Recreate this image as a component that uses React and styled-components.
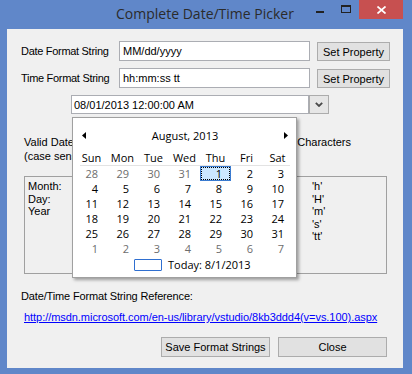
import styled, { createGlobalStyle } from "styled-components";

const GlobalStyle = createGlobalStyle`
  html, body { margin: 0; padding: 0; background: #6087c9; }
  body { font-family: "Liberation Sans", Arial, sans-serif; }
`;

const Frame = styled.div`
  width: 412px;
  height: 374px;
  box-sizing: border-box;
  background: #6087c9;
  padding: 0 9px 6px 7px;
  display: flex;
  flex-direction: column;
`;

const TitleBar = styled.div`
  height: 29px;
  display: grid;
  grid-template-columns: 1fr auto 1fr;
  align-items: start;
`;

const Title = styled.div`
  grid-column: 2;
  font-family: "Open Sans", "Noto Sans", sans-serif;
  font-size: 14px;
  line-height: 27px;
  color: #2b2b2b;
`;

const Controls = styled.div`
  grid-column: 3;
  justify-self: end;
  display: flex;
`;

const WinButton = styled.div`
  width: ${({ $wide }) => ($wide ? "44px" : "26px")};
  height: 19px;
  box-sizing: border-box;
  padding-top: ${({ $top }) => $top}px;
  display: flex;
  justify-content: center;
  align-items: flex-start;
  background: ${({ $wide }) => ($wide ? "#c75050" : "transparent")};
`;

const Client = styled.div`
  flex: 1;
  background: #f0f0f0;
  padding-top: 12px;
  font-size: 11px;
  color: #000;
`;

const FormRow = styled.div`
  display: grid;
  grid-template-columns: 91px 191px 73px;
  column-gap: 7px;
  height: 20px;
  padding-left: 14px;
  align-items: center;

  & + & {
    margin-top: 7px;
  }
`;

const Label = styled.span`
  line-height: 14px;
  white-space: nowrap;
  letter-spacing: -0.3px;
`;

const TextBox = styled.div`
  height: 20px;
  box-sizing: border-box;
  border: 1px solid #abadb3;
  background: #fff;
  padding: 0 3px;
  display: flex;
  align-items: center;
`;

const Button = styled.div`
  width: ${({ $w }) => $w}px;
  height: ${({ $h }) => $h}px;
  box-sizing: border-box;
  align-self: end;
  border: 1px solid #acacac;
  background: #e1e1e1;
  white-space: nowrap;
  display: flex;
  align-items: center;
  justify-content: center;
`;

const Picker = styled.div`
  position: relative;
  margin: 7px 0 0 64px;
  width: 258px;
  height: 19px;
  display: flex;
`;

const PickerField = styled.div`
  flex: 1;
  box-sizing: border-box;
  border: 1px solid #abadb3;
  background: #fff;
  padding-left: 2px;
  display: flex;
  align-items: center;
`;

const PickerButton = styled.div`
  width: 20px;
  box-sizing: border-box;
  border: 1px solid #acacac;
  background: #e6e6e6;
  display: flex;
  align-items: center;
  justify-content: center;
`;

const Calendar = styled.div`
  position: absolute;
  left: 1px;
  top: 22px;
  z-index: 2;
  width: 225px;
  height: 161px;
  box-sizing: border-box;
  border: 1px solid #a0a0a0;
  background: #fff;
  box-shadow: 2px 2px 3px rgba(0, 0, 0, 0.35);
  font-family: "Open Sans", "Noto Sans", sans-serif;
  font-size: 11px;
  color: #000;
`;

const MonthBar = styled.div`
  height: 18px;
  margin: 8px 8px 0 9px;
  display: flex;
  justify-content: space-between;
  align-items: center;
`;

const DayHeads = styled.div`
  display: grid;
  grid-template-columns: repeat(7, 31px);
  margin: 6px 0 0 3px;
  line-height: 15px;
  text-align: center;

  &::after {
    content: "";
    grid-column: 1 / -1;
    height: 1px;
    margin: 0 3px 0 4px;
    background: #e3e3e3;
  }
`;

const DayGrid = styled.div`
  display: grid;
  grid-template-columns: repeat(7, 31px);
  grid-auto-rows: 15px;
  margin-left: 3px;
`;

const Day = styled.div`
  box-sizing: border-box;
  text-align: right;
  line-height: ${({ $selected }) => ($selected ? "13px" : "15px")};
  padding-right: ${({ $selected }) => ($selected ? "8px" : "9px")};
  color: ${({ $muted }) => ($muted ? "#6d6d6d" : "#000")};
  background: ${({ $selected }) => ($selected ? "#cce8ff" : "transparent")};
  border: ${({ $selected }) => ($selected ? "1px solid #3a7bd0" : "none")};
  outline: ${({ $selected }) => ($selected ? "1px dotted #000" : "none")};
  outline-offset: -2px;
`;

const TodayRow = styled.div`
  display: flex;
  align-items: center;
  gap: 6px;
  height: 12px;
  margin-top: 3px;
  padding-left: 61px;
  line-height: 12px;
`;

const TodayBox = styled.div`
  width: 28px;
  height: 12px;
  box-sizing: border-box;
  border: 1px solid #2f6fd0;
  border-radius: 1px;
`;

const Captions = styled.div`
  display: flex;
  justify-content: space-between;
  margin: 21px 52px 0 17px;
  line-height: 14px;
`;

const GroupBox = styled.div`
  height: 98px;
  box-sizing: border-box;
  margin: 13px 16px 0 17px;
  border: 1px solid #a0a0a0;
  padding: 3px 0 0 3px;
  display: grid;
  grid-template-columns: 284px auto;
  grid-auto-rows: 12.6px;
  line-height: 12.6px;
  align-content: start;
`;

const RefLabel = styled.div`
  margin-top: 15px;
  padding-left: 14px;
  line-height: 14px;
  letter-spacing: -0.15px;
`;

const Link = styled.a`
  display: block;
  margin-top: 7px;
  padding-left: 17px;
  line-height: 14px;
  letter-spacing: -0.05px;
  color: #0000ff;
  text-decoration: underline;
`;

const ButtonRow = styled.div`
  display: flex;
  justify-content: flex-end;
  gap: 8px;
  margin-top: 13px;
  padding-right: 16px;
`;

const Arrow = ({ left }) => (
  <svg width="4" height="7" viewBox="0 0 4 7">
    <polygon points={left ? "4,0 4,7 0,3.5" : "0,0 0,7 4,3.5"} fill="#000" />
  </svg>
);

const weeks = [
  [28, 29, 30, 31, 1, 2, 3],
  [4, 5, 6, 7, 8, 9, 10],
  [11, 12, 13, 14, 15, 16, 17],
  [18, 19, 20, 21, 22, 23, 24],
  [25, 26, 27, 28, 29, 30, 31],
  [1, 2, 3, 4, 5, 6, 7],
];

const heads = ["Sun", "Mon", "Tue", "Wed", "Thu", "Fri", "Sat"];

const groupRows = [
  ["Month:", "'h'"],
  ["Day:", "'H'"],
  ["Year", "'m'"],
  ["", "'s'"],
  ["", "'tt'"],
];

export default function App() {
  return (
    <Frame>
      <GlobalStyle />
      <TitleBar>
        <Title>Complete Date/Time Picker</Title>
        <Controls>
          <WinButton $top={11}>
            <svg width="8" height="2"><rect width="8" height="2" fill="#222" /></svg>
          </WinButton>
          <WinButton $top={5}>
            <svg width="10" height="8" viewBox="0 0 10 8">
              <rect x="0.5" y="1" width="9" height="6.5" fill="none" stroke="#222" />
              <rect x="0" y="0" width="10" height="2" fill="#222" />
            </svg>
          </WinButton>
          <WinButton $wide $top={6}>
            <svg width="9" height="8" viewBox="0 0 9 8">
              <path d="M0.5 0.5 L8.5 7.5 M8.5 0.5 L0.5 7.5" stroke="#fff" strokeWidth="1.7" />
            </svg>
          </WinButton>
        </Controls>
      </TitleBar>

      <Client>
        <FormRow>
          <Label>Date Format String</Label>
          <TextBox>MM/dd/yyyy</TextBox>
          <Button $w={73} $h={19}>Set Property</Button>
        </FormRow>
        <FormRow>
          <Label>Time Format String</Label>
          <TextBox>hh:mm:ss tt</TextBox>
          <Button $w={73} $h={19}>Set Property</Button>
        </FormRow>

        <Picker>
          <PickerField>08/01/2013 12:00:00 AM</PickerField>
          <PickerButton>
            <svg width="8" height="5" viewBox="0 0 8 5">
              <polyline points="0.8,0.8 4,4 7.2,0.8" fill="none" stroke="#4a4a4a" strokeWidth="1.8" />
            </svg>
          </PickerButton>

          <Calendar>
            <MonthBar>
              <Arrow left />
              <span>August, 2013</span>
              <Arrow />
            </MonthBar>
            <DayHeads>
              {heads.map((h) => (
                <span key={h}>{h}</span>
              ))}
            </DayHeads>
            <DayGrid>
              {weeks.map((week, w) =>
                week.map((d, i) => {
                  const muted = (w === 0 && d > 20) || w === 5;
                  return (
                    <Day key={`${w}-${i}`} $muted={muted} $selected={w === 0 && d === 1}>
                      {d}
                    </Day>
                  );
                })
              )}
            </DayGrid>
            <TodayRow>
              <TodayBox />
              <span>Today: 8/1/2013</span>
            </TodayRow>
          </Calendar>
        </Picker>

        <Captions>
          <span>
            Valid Date
            <br />
            (case sensitive)
          </span>
          <span>Characters</span>
        </Captions>

        <GroupBox>
          {groupRows.map((row, r) =>
            row.map((cell, c) => <span key={`${r}-${c}`}>{cell}</span>)
          )}
        </GroupBox>

        <RefLabel>Date/Time Format String Reference:</RefLabel>
        <Link href="#">http://msdn.microsoft.com/en-us/library/vstudio/8kb3ddd4(v=vs.100).aspx</Link>

        <ButtonRow>
          <Button $w={109} $h={20}>Save Format Strings</Button>
          <Button $w={109} $h={20}>Close</Button>
        </ButtonRow>
      </Client>
    </Frame>
  );
}
